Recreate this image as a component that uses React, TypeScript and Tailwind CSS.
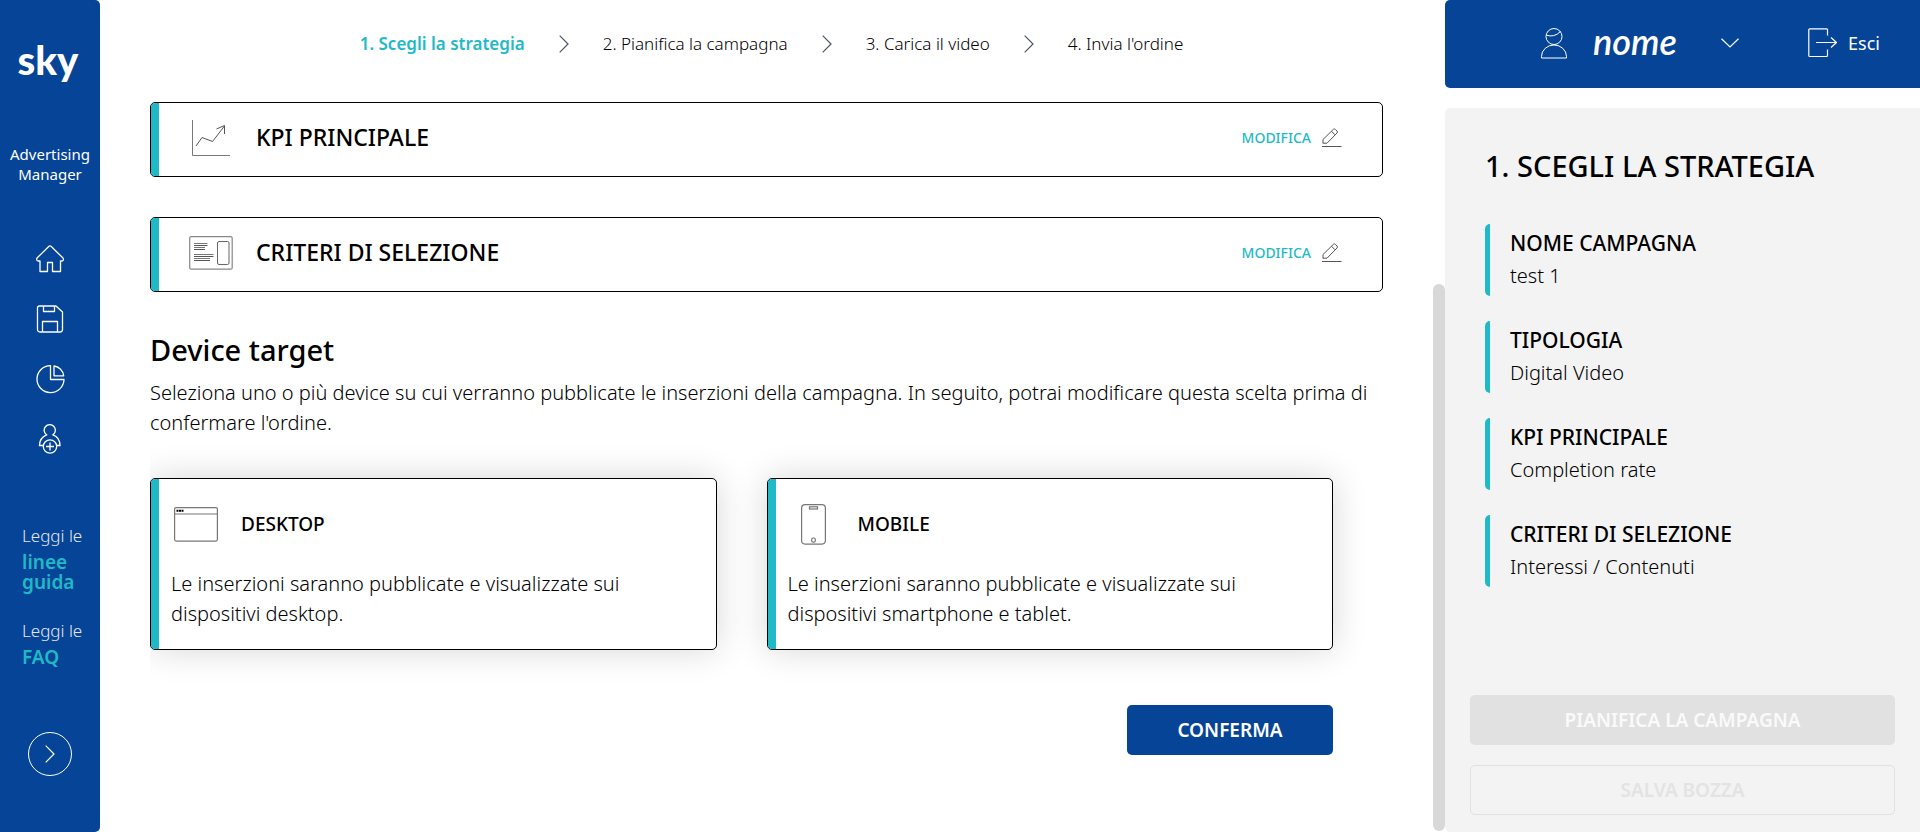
import { useState } from 'react'
import type { ReactNode } from 'react'

interface SummaryItem {
  label: string
  value: string
}

interface Device {
  id: string
  name: string
  description: string
  icon: ReactNode
}

const steps = [
  '1. Scegli la strategia',
  '2. Pianifica la campagna',
  '3. Carica il video',
  "4. Invia l'ordine",
]

const summary: SummaryItem[] = [
  { label: 'NOME CAMPAGNA', value: 'test 1' },
  { label: 'TIPOLOGIA', value: 'Digital Video' },
  { label: 'KPI PRINCIPALE', value: 'Completion rate' },
  { label: 'CRITERI DI SELEZIONE', value: 'Interessi / Contenuti' },
]

function HomeIcon() {
  return (
    <svg width="30" height="30" viewBox="0 0 30 30" fill="none" stroke="currentColor" strokeWidth="1.3" strokeLinejoin="round">
      <path d="M14 2.3Q15 1.4 16 2.3L28 14Q29.2 16.2 27.2 17H25.5V27.5H17.5V18.5H12.5V27.5H5V17H3Q1 16.2 2 14Z" />
    </svg>
  )
}

function SaveIcon() {
  return (
    <svg width="30" height="30" viewBox="0 0 30 30" fill="none" stroke="currentColor" strokeWidth="1.3" strokeLinejoin="round">
      <path d="M4.5 2H21L27.5 8V25.5Q27.5 28 25 28H5Q2.5 28 2.5 25.5V4Q2.5 2 4.5 2Z" />
      <path d="M8.5 2V7.5H19.5V2M7.5 28V17.5H22.5V28" />
    </svg>
  )
}

function ChartIcon() {
  return (
    <svg width="30" height="30" viewBox="0 0 30 30" fill="none" stroke="currentColor" strokeWidth="1.3" strokeLinejoin="round">
      <path d="M15.5 1.6A13.5 13.5 0 1 0 29 15.5H15.5Z" />
      <path d="M19 2A11 11 0 0 1 28.7 11.8H19Z" />
    </svg>
  )
}

function AddUserIcon() {
  return (
    <svg width="30" height="30" viewBox="0 0 30 30" fill="none" stroke="currentColor" strokeWidth="1.3">
      <path d="M8.500 21.500H4.500C4.500 15.500 7.500 12.500 11.500 10.800A5.600 5.600 0 1 1 18 10.800C22.500 12.500 25 15.500 25 21.500H21.500" />
      <circle cx="15" cy="22.500" r="6.700" />
      <path d="M15 18.500V26.500M11 22.500H19" />
    </svg>
  )
}

function TrendIcon() {
  return (
    <svg width="44" height="36" viewBox="0 0 44 36" fill="none" stroke="#555" strokeWidth="1">
      <path d="M3.500 0V35.500H41" stroke="#777" />
      <path d="M7 26L13 17.500L23.500 21.500L35.500 6M27.500 9L35.500 5.500V14" />
    </svg>
  )
}

function CriteriaIcon() {
  return (
    <svg width="44" height="34" viewBox="0 0 44 34" fill="none" stroke="#888" strokeWidth="1.200">
      <rect x="0.700" y="0.700" width="42.500" height="32.500" rx="1.500" />
      <rect x="28.500" y="5.500" width="11.500" height="23" rx="1.500" stroke="#666" strokeWidth="1" />
      <path d="M5 7.500H18.500M5 11.500H16M5 18.500H24.500M5 22.500H21" strokeWidth="1" stroke="#777" />
      <path d="M5 9.500H18.500M5 13.500H16M5 20.500H24.500M5 24.500H21" strokeWidth="1" stroke="#555" />
    </svg>
  )
}

function PencilIcon() {
  return (
    <svg width="20" height="20" viewBox="0 0 20 20" fill="none" stroke="#555" strokeWidth="1" strokeLinejoin="round">
      <path d="M1 15.500V11.500L11.500 1.200Q12.500 .5 13.500 1.500L15 3Q16 4 15 5L5 15.200H1M9.500 3.300L13 6.800" />
      <path d="M0 18.500H19.500" />
    </svg>
  )
}

function DesktopIcon() {
  return (
    <svg width="44" height="35" viewBox="0 0 44 35" fill="none" stroke="#777" strokeWidth="1.200">
      <rect x="0.600" y="0.600" width="42.800" height="33.500" rx="1.500" />
      <path d="M1 7H43" />
      <path d="M2.500 3.700H9.500" stroke="#000" strokeWidth="2" strokeDasharray="2 .5" />
    </svg>
  )
}

function MobileIcon() {
  return (
    <svg width="44" height="41" viewBox="0 0 44 41" fill="none" stroke="#777" strokeWidth="1.200">
      <rect x="10.600" y="0.600" width="23.800" height="39.500" rx="3.500" />
      <rect x="18.500" y="2.800" width="8" height="2.200" />
      <rect x="20.700" y="34" width="3.600" height="4.200" rx="1.500" />
    </svg>
  )
}

function UserIcon() {
  return (
    <svg width="26" height="31" viewBox="0 0 26 31" fill="none" stroke="currentColor" strokeWidth="1">
      <circle cx="13" cy="8.500" r="8" />
      <path d="M5 7Q13 10 19.500 3.500" />
      <path d="M.5 30V28.500A12.500 11.500 0 0 1 25.500 28.500V30Z" />
    </svg>
  )
}

function ExitIcon() {
  return (
    <svg width="30" height="30" viewBox="0 0 30 30" fill="none" stroke="currentColor" strokeWidth="1.200" strokeLinejoin="round">
      <path d="M19.500 7.500V1.500Q19.500 .8 18.500 .8H1.800Q.8 .8 .8 1.800V27.500Q.8 28.500 1.800 28.500H18.500Q19.500 28.500 19.500 27.500V21.500" />
      <path d="M8 14.500H28.500M23 9.500L28.500 14.500L23 19.500" />
    </svg>
  )
}

function ChevronRight() {
  return (
    <svg width="10" height="18" viewBox="0 0 10 18" fill="none" stroke="currentColor" strokeWidth="1.200">
      <path d="M.7 .7L9 9L.7 17.300" />
    </svg>
  )
}

const devices: Device[] = [
  {
    id: 'desktop',
    name: 'DESKTOP',
    description: 'Le inserzioni saranno pubblicate e visualizzate sui dispositivi desktop.',
    icon: <DesktopIcon />,
  },
  {
    id: 'mobile',
    name: 'MOBILE',
    description: 'Le inserzioni saranno pubblicate e visualizzate sui dispositivi smartphone e tablet.',
    icon: <MobileIcon />,
  },
]

const navItems = [
  { label: 'Home', icon: <HomeIcon /> },
  { label: 'Bozze', icon: <SaveIcon /> },
  { label: 'Report', icon: <ChartIcon /> },
  { label: 'Aggiungi utente', icon: <AddUserIcon /> },
]

const helpLinks = ['linee guida', 'FAQ']

function Sidebar() {
  return (
    <aside className="flex w-[100px] shrink-0 flex-col rounded-r-[5px] bg-[#054496] text-white">
      <a href="#" className="mt-8 block pr-1 text-center font-['Lato'] text-[40px] leading-14 font-black">
        sky
      </a>
      <p className="mt-14 text-center text-[15px] leading-5">
        Advertising
        <br />
        Manager
      </p>
      <nav className="mt-[60px] flex flex-col items-center gap-[30px]">
        {navItems.map((item) => (
          <a key={item.label} href="#" aria-label={item.label}>
            {item.icon}
          </a>
        ))}
      </nav>
      <div className="mt-[70px] flex flex-col gap-[27px] pl-[22px]">
        {helpLinks.map((link) => (
          <div key={link}>
            <p className="text-[17px] leading-6 font-light text-gray-200">Leggi le</p>
            <a href="#" className="mt-1 block w-16 text-[19px] leading-5 font-semibold text-[#1fb9c7]">
              {link}
            </a>
          </div>
        ))}
      </div>
      <button
        aria-label="Espandi"
        className="mt-auto mb-14 flex size-11 items-center justify-center self-center rounded-full border-[1.5px] border-white"
      >
        <ChevronRight />
      </button>
    </aside>
  )
}

function StepCard({ title, icon }: { title: string; icon: ReactNode }) {
  return (
    <div className="flex h-[75px] overflow-hidden rounded-[5px] border border-black bg-white">
      <div className="w-2 shrink-0 bg-[#1fb9c7]" />
      <div className="flex flex-1 items-center pr-10 pb-1 pl-[30px]">
        {icon}
        <h2 className="ml-[23px] flex-1 text-[23px] font-medium">{title}</h2>
        <button className="flex items-center gap-[11px] text-sm font-medium text-[#1fb9c7]">
          MODIFICA
          <PencilIcon />
        </button>
      </div>
    </div>
  )
}

export default function App() {
  const [selected, setSelected] = useState<string | null>(null)

  return (
    <div className="flex min-h-screen bg-white font-['Noto_Sans','Open_Sans',sans-serif] text-black">
      <Sidebar />

      {/* Main column */}
      <main className="flex min-w-0 flex-1">
        <div className="min-w-0 flex-1 pr-[50px] pl-[50px]">
          <ol className="flex h-[87px] items-center justify-center gap-[34px] pl-[10px] text-[17px] whitespace-nowrap">
            {steps.map((step, i) => (
              <li key={step} className="flex items-center gap-[34px]">
                {i > 0 && (
                  <span className="text-gray-600">
                    <ChevronRight />
                  </span>
                )}
                <span className={i === 0 ? 'font-semibold text-[#1fb9c7]' : 'font-light'}>{step}</span>
              </li>
            ))}
          </ol>

          <div className="mt-[15px] flex flex-col gap-10">
            <StepCard title="KPI PRINCIPALE" icon={<TrendIcon />} />
            <StepCard title="CRITERI DI SELEZIONE" icon={<CriteriaIcon />} />
          </div>

          <h1 className="mt-10 text-[29px] leading-9 font-medium">Device target</h1>
          <p className="mt-[10px] text-xl leading-[30px] font-light">
            Seleziona uno o più device su cui verranno pubblicate le inserzioni della campagna. In seguito, potrai
            modificare questa scelta prima di confermare l'ordine.
          </p>

          {/* Device cards */}
          <div className="overflow-hidden pt-10 pr-[50px] pb-[55px]">
            <div className="grid grid-cols-2 gap-[50px]">
              {devices.map((device) => (
                <button
                  key={device.id}
                  aria-pressed={selected === device.id}
                  onClick={() => setSelected(device.id)}
                  className="flex h-[172px] overflow-hidden rounded-[5px] border border-black bg-white text-left shadow-[0_0_35px_rgba(0,0,0,0.16)]"
                >
                  <span className="w-2 shrink-0 self-stretch bg-[#1fb9c7]" />
                  <span className="block flex-1 px-3 pt-[21px]">
                    <span className="flex h-12 items-center gap-[23px] pl-[3px]">
                      {device.icon}
                      <span className="text-[19px] font-medium">{device.name}</span>
                    </span>
                    <span className="mt-[21px] block text-xl leading-[30px] font-light">{device.description}</span>
                  </span>
                </button>
              ))}
            </div>
          </div>

          <div className="flex justify-end pr-[50px]">
            <button className="h-[50px] w-[206px] rounded-[5px] bg-[#054496] text-[19px] font-semibold text-white">
              CONFERMA
            </button>
          </div>
        </div>
        <div className="flex w-3 flex-col pt-[284px] pb-px">
          <div className="flex-1 rounded-full bg-[#d8d8d8]" />
        </div>
      </main>

      {/* Right column */}
      <aside className="flex w-[475px] shrink-0 flex-col gap-5">
        <header className="flex h-[88px] items-center rounded-l-[5px] bg-[#054496] pb-[2px] pl-24 text-white">
          <button className="flex items-center">
            <UserIcon />
            <span className="ml-[26px] pb-1 font-['Lato',cursive] text-[36px] leading-10 font-semibold italic">nome</span>
            <svg className="ml-11" width="18" height="10" viewBox="0 0 18 10" fill="none" stroke="currentColor" strokeWidth="1.200">
              <path d="M.5 .7L9 9L17.500 .7" />
            </svg>
          </button>
          <a href="#" className="mr-10 ml-auto flex items-center gap-[10px] text-lg">
            <ExitIcon />
            Esci
          </a>
        </header>

        <section className="flex flex-1 flex-col rounded-l-[5px] bg-[#f3f3f3] px-[25px] pt-10 pb-[17px]">
          <h2 className="pl-[15px] text-[29px] leading-9 font-medium">1. SCEGLI LA STRATEGIA</h2>
          <dl className="mt-10 flex flex-col gap-[25px] pl-[15px]">
            {summary.map((item) => (
              <div key={item.label} className="flex h-[72px] gap-5">
                <span className="w-[5px] rounded-l-[5px] bg-[#1fb9c7]" />
                <div className="pt-1">
                  <dt className="text-[21px] leading-[30px] font-medium">{item.label}</dt>
                  <dd className="mt-[3px] text-xl leading-[30px] font-light">{item.value}</dd>
                </div>
              </div>
            ))}
          </dl>
          <div className="mt-auto flex flex-col gap-5">
            <button disabled className="h-[50px] rounded-[5px] bg-[#e1e1e1] text-[19px] font-semibold text-[#fafafa]">
              PIANIFICA LA CAMPAGNA
            </button>
            <button
              disabled
              className="h-[50px] rounded-[5px] border border-[#e1e1e1] text-[19px] font-semibold text-[#e3e3e3]"
            >
              SALVA BOZZA
            </button>
          </div>
        </section>
      </aside>
    </div>
  )
}
